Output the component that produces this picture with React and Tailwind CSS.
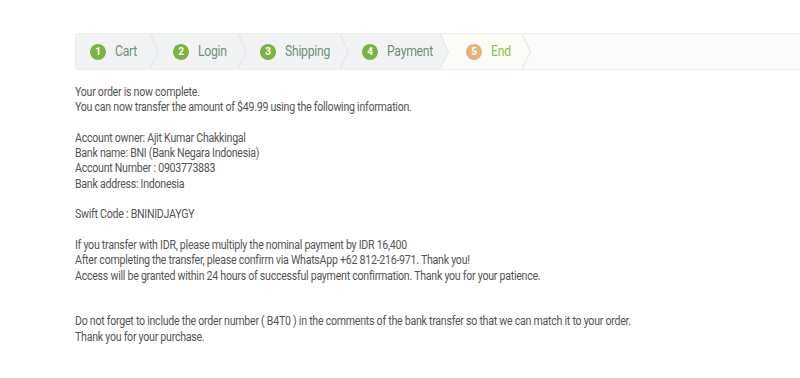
const steps = [
  { n: 1, label: "Cart", w: "w-[74px]", pl: "pl-[14px]" },
  { n: 2, label: "Login", w: "w-[79px]", pl: "pl-[14px]" },
  { n: 3, label: "Shipping", w: "w-[93px]", pl: "pl-[13px]" },
  { n: 4, label: "Payment", w: "w-[91px]", pl: "pl-[13px]" },
];

function Chevron({ left, right }) {
  return (
    <svg width="9" height="35" viewBox="0 0 9 35" className="shrink-0 block">
      <rect x="0" y="0" width="9" height="35" fill={right} />
      <polygon points="0,0 8.5,17.5 0,35" fill={left} />
      <polyline points="0,0 8.5,17.5 0,35" fill="none" stroke="#e3e4e6" strokeWidth="1" />
    </svg>
  );
}

export default function App() {
  return (
    <div className="min-h-[378px] bg-white font-['Roboto',sans-serif] text-[12px] text-[#555] tracking-[-0.3px]">
      <div className="pt-[33px] pl-[75px]">
        <div className="flex h-[37px] border border-r-0 border-[#ececec] rounded-l-[3px] overflow-hidden">
          {steps.map((s, i) => (
            <div key={s.n} className="flex items-stretch">
              <div className={`flex items-center bg-[#f2f3f5] ${s.w} ${s.pl}`}>
                <span className="w-[16px] h-[16px] shrink-0 rounded-full bg-[#7cb342] text-white text-[10px] font-bold flex items-center justify-center tracking-normal">
                  {s.n}
                </span>
                <span className="ml-[9px] text-[14px] text-[#6f8f79] scale-x-[0.87] origin-left whitespace-nowrap">{s.label}</span>
              </div>
              <Chevron left="#f2f3f5" right={i === 3 ? "#fbfcf6" : "#f2f3f5"} />
            </div>
          ))}
          <div className="flex items-center bg-[#fbfcf6] w-[73px] pl-[17px]">
            <span className="w-[16px] h-[16px] shrink-0 rounded-full bg-[#e3b27d] text-white text-[10px] font-bold flex items-center justify-center tracking-normal">
              5
            </span>
            <span className="ml-[9px] text-[14px] text-[#8bc34a] scale-x-[0.87] origin-left">End</span>
          </div>
          <Chevron left="#fbfcf6" right="#fbfbfb" />
          <div className="flex-1 bg-[#fbfbfb]" />
        </div>
      </div>

      <div className="pl-[75px] pt-[15px] leading-[15.3px]">
        <div className="scale-x-[0.885] origin-left whitespace-nowrap">
          <p>Your order is now complete.</p>
          <p>You can now transfer the amount of $49.99 using the following information.</p>
          <p className="mt-[15.3px]">Account owner: Ajit Kumar Chakkingal</p>
          <p>Bank name: BNI (Bank Negara Indonesia)</p>
          <p>Account Number : 0903773883</p>
          <p>Bank address: Indonesia</p>
          <p className="mt-[15.3px]">Swift Code : BNINIDJAYGY</p>
          <p className="mt-[15.3px]">If you transfer with IDR, please multiply the nominal payment by IDR 16,400</p>
          <p>After completing the transfer, please confirm via WhatsApp +62 812-216-971. Thank you!</p>
          <p>Access will be granted within 24 hours of successful payment confirmation. Thank you for your patience.</p>
          <p className="mt-[30.6px]">Do not forget to include the order number ( B4T0 ) in the comments of the bank transfer so that we can match it to your order.</p>
          <p>Thank you for your purchase.</p>
        </div>
      </div>
    </div>
  );
}
